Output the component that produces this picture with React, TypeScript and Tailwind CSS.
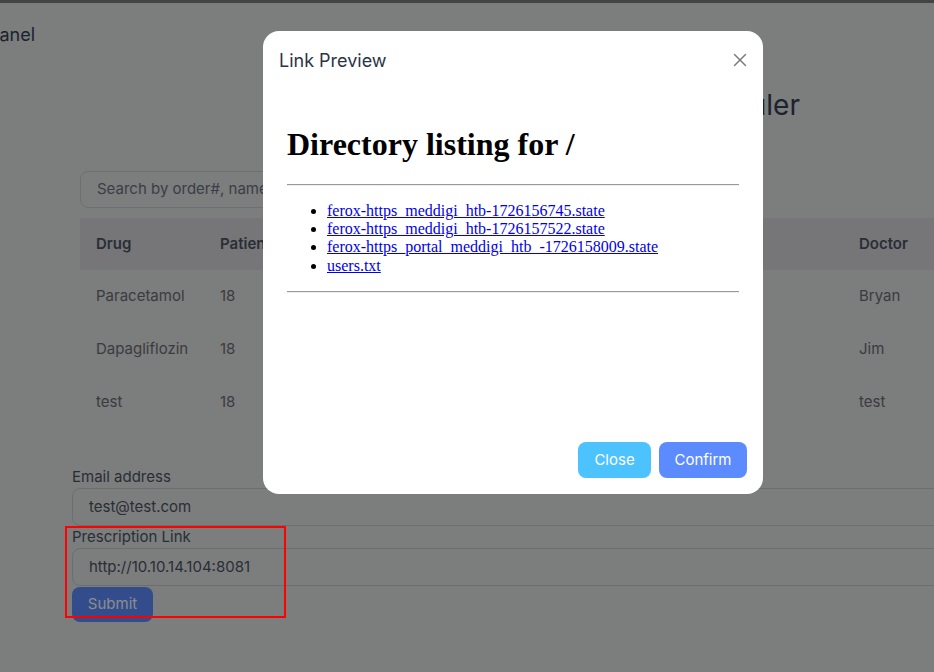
import React from 'react';
import { X } from 'lucide-react';

const rows = [
  { drug: 'Paracetamol', patient: '18', dose: '500mg', date: '09/10', status: 'Active', doctor: 'Bryan' },
  { drug: 'Dapagliflozin', patient: '18', dose: '10mg', date: '09/11', status: 'Active', doctor: 'Jim' },
  { drug: 'test', patient: '18', dose: 'test', date: '09/12', status: 'New', doctor: 'test' },
];

const files = [
  'ferox-https_meddigi_htb-1726156745.state',
  'ferox-https_meddigi_htb-1726157522.state',
  'ferox-https_portal_meddigi_htb_-1726158009.state',
  'users.txt',
];

const gridCols = 'grid grid-cols-[124px_160px_160px_160px_159px_1fr]';

export default function App() {
  return (
    <div className="relative w-[934px] h-[672px] overflow-hidden bg-[#e2e3e3] font-['Inter','Noto_Sans',sans-serif]">
      <div className="h-[3px] bg-[#7a7c7b]" />

      {/* Page behind the dialog */}
      <div className="flex flex-col">
        <div className="mt-[18px] ml-[-12px] text-[18px] leading-[27px] text-[#334155]">Panel</div>

        <div className="mt-[40px] flex justify-end pr-[134px]">
          <h2 className="text-[28px] leading-[34px] text-[#334155]">Prescription Scheduler</h2>
        </div>

        <div className="mt-[49px] ml-[80px] w-[340px] h-[37px] rounded-lg border border-[#c9cbd0] flex items-center px-4 text-[15px] text-[#6b7280]">
          Search by order#, name...
        </div>

        {/* Orders table */}
        <div className="mt-[10px] ml-[80px] w-[900px] text-[15px]">
          <div className={`${gridCols} h-[52px] items-center px-4 bg-[#d7d8dc] font-semibold text-[#4b5563]`}>
            <span>Drug</span>
            <span>Patient</span>
            <span>Dose</span>
            <span>Date</span>
            <span>Status</span>
            <span>Doctor</span>
          </div>
          {rows.map((r) => (
            <div key={r.drug} className={`${gridCols} h-[53px] items-center px-4 text-[#6b6e75]`}>
              <span>{r.drug}</span>
              <span>{r.patient}</span>
              <span>{r.dose}</span>
              <span>{r.date}</span>
              <span>{r.status}</span>
              <span>{r.doctor}</span>
            </div>
          ))}
        </div>

        {/* Form */}
        <div className="mt-[38px] ml-[72px] w-[900px] flex flex-col text-[15px]">
          <label className="leading-[20px] text-[#4b5563]">Email address</label>
          <div className="mt-[1px] h-[38px] rounded-lg border border-[#c6c8cd] flex items-center px-4 text-[#4b5563]">
            test@test.com
          </div>
          <label className="mt-[1px] leading-[20px] text-[#4b5563]">Prescription Link</label>
          <div className="mt-[1px] h-[38px] rounded-lg border border-[#c6c8cd] flex items-center px-4 text-[#4b5563]">
            http://10.10.14.104:8081
          </div>
          <button className="mt-[1px] w-[81px] h-[35px] rounded-lg bg-[#5b8bff] text-white text-[15px]">Submit</button>
        </div>
      </div>

      {/* Backdrop */}
      <div className="absolute inset-0 bg-black/45" />

      {/* Link preview dialog */}
      <div className="absolute left-[263px] top-[31px] w-[500px] h-[463px] bg-white rounded-2xl flex flex-col">
        <div className="h-[58px] flex items-center justify-between pl-4 pr-3">
          <span className="text-[18px] text-[#2b3445]">Link Preview</span>
          <X size={22} strokeWidth={1.6} className="text-[#7c7c7c]" />
        </div>
        <div className="flex-1 px-4 pt-4">
          <div className="h-[321px] px-2 overflow-hidden font-['Liberation_Serif',serif] text-black">
            <h1 className="pt-[21px] mb-[21px] text-[32px] font-bold leading-[37px]">Directory listing for /</h1>
            <div className="border-t border-[#9a9a9a] border-b border-b-[#eeeeee] h-[2px]" />
            <ul className="my-4 pl-10 list-disc text-[16px] leading-[18.2px]">
              {files.map((f) => (
                <li key={f}>
                  <a className="text-[#0000ee] underline">{f}</a>
                </li>
              ))}
            </ul>
            <div className="border-t border-[#9a9a9a] border-b border-b-[#eeeeee] h-[2px]" />
          </div>
        </div>
        <div className="flex justify-end gap-2 px-4 pb-4 pt-4">
          <button className="w-[73px] h-[36px] rounded-lg bg-[#4cc2ff] text-white text-[15px]">Close</button>
          <button className="w-[88px] h-[36px] rounded-lg bg-[#5c8bff] text-white text-[15px]">Confirm</button>
        </div>
      </div>

      {/* Highlight annotation */}
      <div className="absolute left-[65px] top-[526px] w-[221px] h-[92px] border-2 border-[#ff0000]" />
    </div>
  );
}
